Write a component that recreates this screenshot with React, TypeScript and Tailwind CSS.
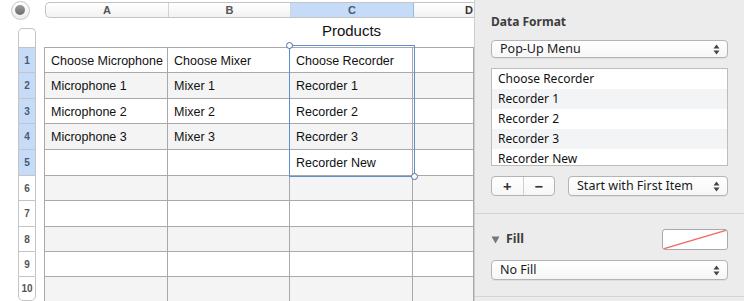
import React from "react";

const rowHeights = [25, 26, 25, 26, 26, 25, 26, 25, 25, 25];

const cells: string[][] = [
  ["Choose Microphone", "Choose Mixer", "Choose Recorder", ""],
  ["Microphone 1", "Mixer 1", "Recorder 1", ""],
  ["Microphone 2", "Mixer 2", "Recorder 2", ""],
  ["Microphone 3", "Mixer 3", "Recorder 3", ""],
  ["", "", "Recorder New", ""],
  ["", "", "", ""],
  ["", "", "", ""],
  ["", "", "", ""],
  ["", "", "", ""],
  ["", "", "", ""],
];

const colWidths = ["w-[123px]", "w-[122px]", "w-[123px]", "w-[61px]"];

const listItems = ["Choose Recorder", "Recorder 1", "Recorder 2", "Recorder 3", "Recorder New"];

const Arrows = () => (
  <svg width="7" height="11" viewBox="0 0 7 11" className="shrink-0">
    <path d="M3.5 0.5 L6.5 4.5 L0.5 4.5 Z" fill="#444" />
    <path d="M3.5 10.5 L6.5 6.5 L0.5 6.5 Z" fill="#444" />
  </svg>
);

const PopUp = ({ label, className }: { label: string; className: string }) => (
  <div
    className={`flex items-center justify-between rounded-[4px] border border-[#b4b4b4] bg-gradient-to-b from-white to-[#f6f6f6] pl-[8px] pr-[7px] shadow-[0_1px_0_rgba(0,0,0,0.06)] ${className}`}
  >
    <span className="whitespace-nowrap text-[12.5px] leading-none text-[#1a1a1a]">{label}</span>
    <Arrows />
  </div>
);

const App = () => {
  return (
    <div className="flex h-[301px] w-[744px] overflow-hidden bg-white font-['Liberation_Sans',sans-serif]">
      {/* sheet */}
      <div className="relative flex w-[474px] shrink-0 flex-col">
        {/* column header */}
        <div className="flex h-[20px] items-center">
          <div className="flex w-[45px] justify-center pl-[5px] pr-[10px]">
            <div className="flex h-[19px] w-[19px] items-center justify-center rounded-full border border-[#c6c6c6] bg-gradient-to-b from-white to-[#ececec]">
              <div className="h-[10px] w-[10px] rounded-full bg-gradient-to-b from-[#9a9a9a] to-[#6e6e6e]" />
            </div>
          </div>
          <div className="flex h-[16px] flex-1 items-stretch overflow-hidden rounded-l-[5px] border border-r-0 border-[#c4c4c4] bg-gradient-to-b from-white to-[#f2f2f2] text-[11px] font-bold text-[#555]">
            <div className="flex w-[123px] items-center justify-center border-r border-[#d2d2d2]">A</div>
            <div className="flex w-[122px] items-center justify-center border-r border-[#d2d2d2]">B</div>
            <div className="flex w-[123px] items-center justify-center border-r border-[#9ab8e2] bg-[#c6dbf7] text-[#4a5a70]">C</div>
            <div className="flex flex-1 items-center justify-end text-[#333]">
              <span className="pr-[1px]">D</span>
            </div>
          </div>
        </div>

        {/* title row */}
        <div className="flex h-[27px]">
          <div className="flex w-[45px] items-end pl-[18px]">
            <div className="h-[19px] w-[18px] rounded-t-[5px] border border-b-0 border-[#c4c4c4] bg-white" />
          </div>
          <div className="flex flex-1">
            <div className="w-[245px]" />
            <div className="flex w-[123px] items-center justify-center pb-[5px] text-[15px] text-[#111]">
              Products
            </div>
          </div>
        </div>

        {/* rows */}
        <div className="flex flex-1 flex-col">
          {rowHeights.map((h, r) => (
            <div key={r} className="flex" style={{ height: h }}>
              <div className="flex w-[45px] pl-[18px]">
                <div
                  className={`flex w-[18px] items-center justify-center border-x border-t border-[#c4c4c4] text-[10px] font-bold ${
                    r < 5 ? "bg-[#c6dbf7] text-[#4a5a70]" : "bg-white text-[#555]"
                  } ${r === 9 ? "rounded-b-[5px] border-b" : ""}`}
                >
                  {r + 1}
                </div>
              </div>
              <div
                className={`flex flex-1 border-t border-l border-[#a9a9a9] ${
                  r % 2 === 1 ? "bg-[#f4f4f4]" : "bg-white"
                }`}
              >
                {cells[r].map((t, c) => (
                  <div
                    key={c}
                    className={`flex items-center overflow-hidden whitespace-nowrap border-r border-[#a9a9a9] pl-[6px] pt-[2px] text-[12.5px] text-[#111] ${colWidths[c]}`}
                  >
                    {t}
                  </div>
                ))}
              </div>
            </div>
          ))}
        </div>

        {/* selection */}
        <div className="absolute left-[289px] top-[45px] h-[132px] w-[126px] border border-[#5b8fd6]">
          <div className="absolute -left-[4px] -top-[4px] h-[7px] w-[7px] rounded-full border border-[#4a6fa8] bg-white" />
          <div className="absolute -bottom-[4px] -right-[4px] h-[7px] w-[7px] rounded-full border border-[#4a6fa8] bg-white" />
        </div>
      </div>

      {/* inspector */}
      <div className="flex flex-1 flex-col border-l border-[#cdcdcd] bg-[#ececec] font-['Noto_Sans',sans-serif]">
        <div className="px-[16px] pt-[13px]">
          <div className="text-[12px] font-bold leading-[18px] text-[#3d3d3d]">Data Format</div>
          <PopUp label="Pop-Up Menu" className="mt-[9px] h-[18px]" />
          <div className="mt-[10px] h-[98px] overflow-hidden border border-[#bdbdbd] bg-white">
            {listItems.map((t, i) => (
              <div
                key={t}
                className={`flex h-[20px] items-center pl-[6px] text-[12px] text-[#111] ${
                  i % 2 === 1 ? "bg-[#f3f4f5]" : "bg-white"
                }`}
              >
                {t}
              </div>
            ))}
          </div>
          <div className="mt-[10px] flex items-center justify-between">
            <div className="flex h-[20px] w-[64px] rounded-[4px] border border-[#b4b4b4] bg-gradient-to-b from-white to-[#f6f6f6] text-[#333]">
              <div className="flex flex-1 items-center justify-center border-r border-[#cfcfcf] text-[15px] font-bold leading-none">
                +
              </div>
              <div className="flex flex-1 items-center justify-center text-[15px] font-bold leading-none">
                −
              </div>
            </div>
            <PopUp label="Start with First Item" className="h-[20px] w-[160px]" />
          </div>
        </div>
        <div className="mt-[17px] border-t border-[#d4d4d4]" />
        <div className="px-[16px] pt-[15px]">
          <div className="flex items-center justify-between">
            <div className="flex items-center gap-[6px]">
              <svg width="9" height="8" viewBox="0 0 9 8">
                <path d="M0.5 0.5 L8.5 0.5 L4.5 7.5 Z" fill="#777" />
              </svg>
              <span className="text-[12.5px] font-bold text-[#3d3d3d]">Fill</span>
            </div>
            <div className="h-[21px] w-[66px] overflow-hidden rounded-[3px] border border-[#a9a9a9] bg-white">
              <svg width="64" height="19" viewBox="0 0 64 19">
                <line x1="0" y1="19" x2="64" y2="0" stroke="#f26b6b" strokeWidth="1.3" />
              </svg>
            </div>
          </div>
          <PopUp label="No Fill" className="mt-[10px] h-[20px]" />
        </div>
        <div className="mt-[16px] border-t border-[#d4d4d4]" />
      </div>
    </div>
  );
};

export default App;
